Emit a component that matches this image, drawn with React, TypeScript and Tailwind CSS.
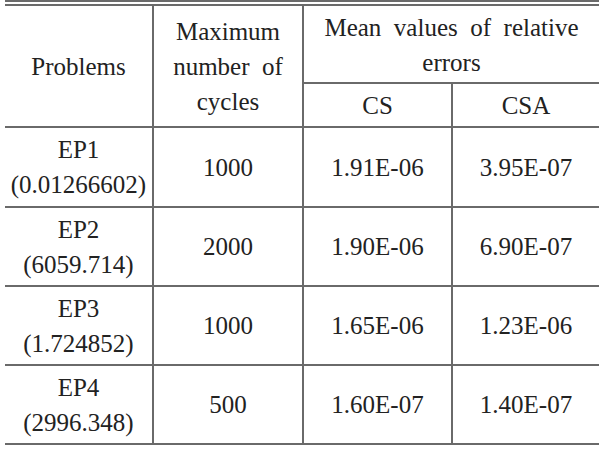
const rows = [
  { name: "EP1", value: "(0.01266602)", cycles: "1000", cs: "1.91E-06", csa: "3.95E-07", h: "h-[80px]" },
  { name: "EP2", value: "(6059.714)", cycles: "2000", cs: "1.90E-06", csa: "6.90E-07", h: "h-[79px]" },
  { name: "EP3", value: "(1.724852)", cycles: "1000", cs: "1.65E-06", csa: "1.23E-06", h: "h-[79px]" },
  { name: "EP4", value: "(2996.348)", cycles: "500", cs: "1.60E-07", csa: "1.40E-07", h: "h-[79px]" },
]

const cell = "flex flex-col items-center justify-center text-center border-b-2 border-[#6a6a6a]"

export default function App() {
  return (
    <div className="w-[599px] h-[451px] bg-white pl-[5px] text-[#222] font-[Liberation_Serif,Times_New_Roman,serif] text-[25px] leading-[35px]">
      <div className="flex flex-col w-[594px] h-[6px] justify-between">
        <div className="h-[2px] bg-[#6a6a6a]" />
        <div className="h-[2px] bg-[#6a6a6a]" />
      </div>

      {/* header */}
      <div className="flex w-[594px]">
        <div className={`${cell} w-[149px] h-[122px] border-r-2`}>Problems</div>
        <div className={`${cell} w-[150px] h-[122px] border-r-2 pt-[1px]`}>
          <span>Maximum</span>
          <span>number&nbsp;&nbsp;of</span>
          <span>cycles</span>
        </div>
        <div className="flex flex-col w-[295px]">
          <div className={`${cell} h-[78px] pt-[1px]`}>
            <span>Mean&nbsp; values&nbsp; of&nbsp; relative</span>
            <span>errors</span>
          </div>
          <div className="flex">
            <div className={`${cell} w-[149px] h-[44px] border-r-2`}>CS</div>
            <div className={`${cell} w-[146px] h-[44px]`}>CSA</div>
          </div>
        </div>
      </div>

      {/* body */}
      {rows.map((r) => (
        <div key={r.name} className="flex w-[594px]">
          <div className={`${cell} ${r.h} w-[149px] border-r-2`}>
            <span>{r.name}</span>
            <span>{r.value}</span>
          </div>
          <div className={`${cell} ${r.h} w-[150px] border-r-2`}>{r.cycles}</div>
          <div className={`${cell} ${r.h} w-[149px] border-r-2`}>{r.cs}</div>
          <div className={`${cell} ${r.h} w-[146px]`}>{r.csa}</div>
        </div>
      ))}
    </div>
  )
}
